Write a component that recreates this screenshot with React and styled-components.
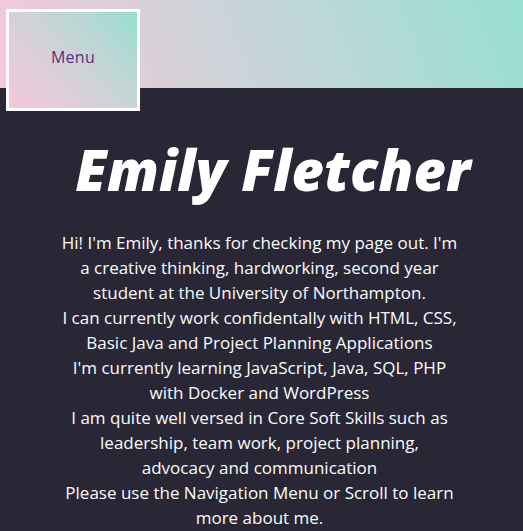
import React from "react";
import styled, { createGlobalStyle } from "styled-components";

const GlobalStyle = createGlobalStyle`
  html, body {
    margin: 0;
    padding: 0;
    background: #292736;
  }
  body {
    font-family: "Open Sans", "Liberation Sans", sans-serif;
  }
`;

const lines = [
  "Hi! I'm Emily, thanks for checking my page out. I'm",
  "a creative thinking, hardworking, second year",
  "student at the University of Northampton.",
  "I can currently work confidentally with HTML, CSS,",
  "Basic Java and Project Planning Applications",
  "I'm currently learning JavaScript, Java, SQL, PHP",
  "with Docker and WordPress",
  "I am quite well versed in Core Soft Skills such as",
  "leadership, team work, project planning,",
  "advocacy and communication",
  "Please use the Navigation Menu or Scroll to learn",
  "more about me.",
];

function App() {
  return (
    <Page>
      <GlobalStyle />
      <Header>
        <MenuButton>Menu</MenuButton>
      </Header>
      <Main>
        <Title>Emily Fletcher</Title>
        <Intro>
          {lines.map((l, i) => (
            <Line key={i}>{l}</Line>
          ))}
        </Intro>
      </Main>
    </Page>
  );
}

const Page = styled.div`
  position: relative;
  min-height: 531px;
  background: #292736;
  overflow: hidden;
`;

const Header = styled.header`
  height: 88px;
  background: linear-gradient(
    70deg,
    #f6c7dc 0%,
    #d4d1d9 35%,
    #b9d8d6 65%,
    #97dfd1 100%
  );
`;

const MenuButton = styled.div`
  position: absolute;
  left: 6px;
  top: 9px;
  width: 128px;
  height: 90px;
  padding-bottom: 6px;
  box-sizing: content-box;
  border: 3px solid #ffffff;
  background: linear-gradient(45deg, #f5c7db 0%, #d0d2d8 50%, #97dfd0 100%);
  display: flex;
  align-items: center;
  justify-content: center;
  color: #5a2d82;
  font-size: 16px;
  font-weight: 400;
  letter-spacing: 0.3px;
`;

const Main = styled.main`
  display: flex;
  flex-direction: column;
  align-items: center;
  padding: 43px 0 0;
`;

const Title = styled.h1`
  margin: 0 0 0 23px;
  color: #ffffff;
  font-size: 56px;
  font-weight: 800;
  font-style: italic;
  line-height: 76px;
  letter-spacing: 0.2px;
`;

const Intro = styled.p`
  margin: 23px 0 0 -4px;
  color: #fbfbfb;
  text-align: center;
  font-size: 17px;
  line-height: 25px;
  font-weight: 500;
`;

const Line = styled.span`
  display: block;
  white-space: nowrap;
`;

export default App;
